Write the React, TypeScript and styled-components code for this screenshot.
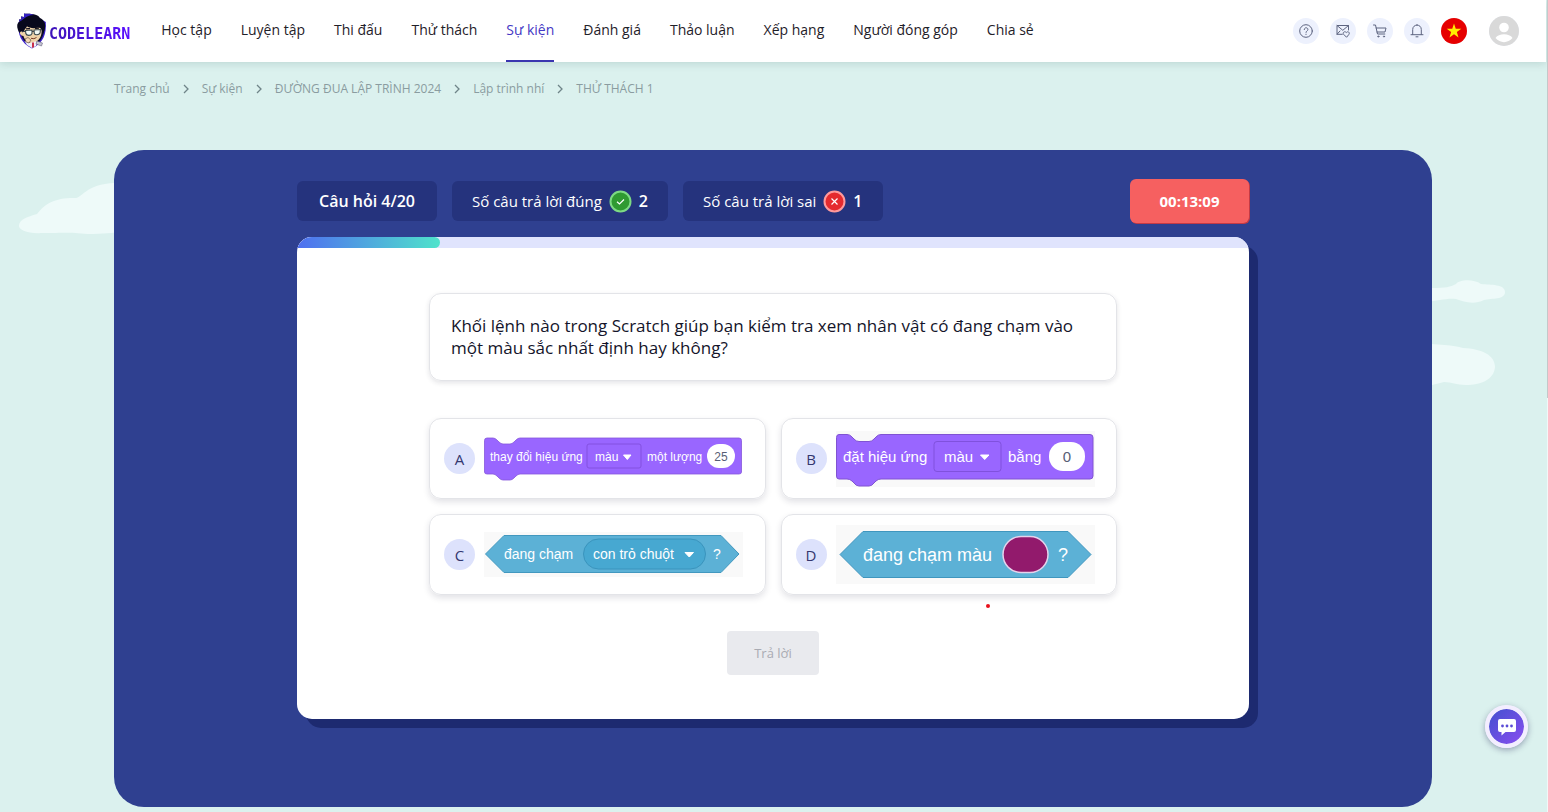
import React from "react";
import styled, { createGlobalStyle } from "styled-components";

const GlobalStyle = createGlobalStyle`
  *, *::before, *::after { box-sizing: border-box; }
  body {
    margin: 0;
    background: #dbf1ee;
    font-family: "Open Sans", "Noto Sans", sans-serif;
    color: #1c1c2b;
  }
  button { font-family: inherit; cursor: pointer; }
`;

const Page = styled.div`
  position: relative;
  min-height: 100vh;
  padding: 0 2px 5px 0;
  overflow: hidden;
`;

const ScrollRail = styled.div`
  position: absolute;
  z-index: 3;
  top: 0;
  right: 0;
  bottom: 0;
  width: 1px;
  background: linear-gradient(#c4c8c9 0 49%, #f2f7f7 49%);
`;

/* ---------- header ---------- */

const Header = styled.header`
  position: relative;
  z-index: 2;
  display: flex;
  align-items: center;
  height: 62px;
  padding: 0 27px 0 16px;
  background: #fff;
  box-shadow: 0 2px 8px rgba(40, 90, 90, 0.16);
`;

const Brand = styled.a`
  display: flex;
  align-items: center;
  gap: 1px;
  margin-right: 31px;
  color: #4a12e0;
  text-decoration: none;
`;

const BrandName = styled.span`
  padding-top: 5px;
  font: 700 15px/20px "DejaVu Sans Mono", monospace;
  background: linear-gradient(90deg, #3d14b8, #5a10ff);
  background-clip: text;
  -webkit-text-fill-color: transparent;
`;

const Nav = styled.nav`
  display: flex;
  gap: 29px;
  height: 100%;
`;

const NavLink = styled.a<{ $active?: boolean }>`
  display: flex;
  align-items: center;
  height: 100%;
  border-bottom: 2px solid ${(p) => (p.$active ? "#3a36b0" : "transparent")};
  color: ${(p) => (p.$active ? "#4338c4" : "#1f2129")};
  font-size: 14px;
  line-height: 20px;
  text-decoration: none;
  white-space: nowrap;
`;

const Tools = styled.div`
  display: flex;
  align-items: center;
  gap: 11px;
  margin-left: auto;
`;

const ToolButton = styled.button`
  display: flex;
  align-items: center;
  justify-content: center;
  width: 26px;
  height: 26px;
  padding: 0;
  border: 0;
  border-radius: 50%;
  background: #edf1fd;
  color: #5d6480;
`;

const AvatarButton = styled(ToolButton)`
  width: 30px;
  height: 30px;
  margin-left: 11px;
`;

/* ---------- page body ---------- */

const Container = styled.main`
  position: relative;
  z-index: 1;
  max-width: 1318px;
  margin: 0 auto;
`;

const Breadcrumbs = styled.nav`
  display: flex;
  align-items: center;
  gap: 12px;
  padding: 18px 0 52px;
  color: #6f8488;
`;

const Crumb = styled.a`
  color: #8a9ca0;
  font-size: 12px;
  line-height: 18px;
  text-decoration: none;
`;

const Cloud = styled.svg<{ $side: "left" | "right"; $top: number }>`
  position: absolute;
  top: ${(p) => p.$top}px;
  ${(p) => p.$side}: 18px;
  fill: #eefaf9;
`;

const Arena = styled.section`
  padding: 29px 16px 88px;
  border-radius: 30px;
  background: #2f4090;
`;

const ArenaInner = styled.div`
  max-width: 952px;
  margin: 0 auto;
`;

const StatusRow = styled.div`
  display: flex;
  align-items: center;
  gap: 15px;
  margin-bottom: 14px;
`;

const Chip = styled.div<{ $strong?: boolean }>`
  display: flex;
  align-items: center;
  gap: 7px;
  height: 40px;
  padding: 0 ${(p) => (p.$strong ? 22 : 20)}px;
  border-radius: 6px;
  background: #25337d;
  color: #fff;
  font-size: ${(p) => (p.$strong ? 16 : 15)}px;
  font-weight: ${(p) => (p.$strong ? 600 : 400)};
  white-space: nowrap;
`;

const Count = styled.span`
  font-size: 16px;
  font-weight: 600;
`;

const Timer = styled.time`
  display: flex;
  align-items: center;
  justify-content: center;
  width: 119px;
  height: 44px;
  margin-left: auto;
  border-radius: 6px;
  background: #f66060;
  box-shadow: 1px 1px 0 #c43a44;
  color: #fff;
  font-size: 15px;
  font-weight: 700;
`;

const Board = styled.div`
  overflow: hidden;
  border-radius: 15px;
  background: #fff;
`;

const BoardShadow = styled.div`
  border-radius: 15px;
  box-shadow: 9px 9px 0 #1d2a70;
`;

const Progress = styled.div`
  height: 11px;
  background: #e0e4fd;
`;

const ProgressFill = styled.div`
  height: 100%;
  border-radius: 0 6px 6px 0;
  background: linear-gradient(90deg, #4f6ff0, #4fe3cb);
`;

const Quiz = styled.form`
  display: flex;
  flex-direction: column;
  align-items: center;
  max-width: 688px;
  margin: 0 auto;
  padding: 45px 0 44px;
`;

const Question = styled.h1`
  width: 100%;
  margin: 0 0 37px;
  padding: 21px;
  border: 1px solid #e3e4e8;
  border-radius: 12px;
  box-shadow: 0 2px 5px rgba(30, 30, 60, 0.12);
  color: #14142a;
  font-size: 17px;
  font-weight: 500;
  line-height: 22px;
`;

const Options = styled.div`
  position: relative;
  display: grid;
  grid-template-columns: 1fr 1fr;
  gap: 15px;
  width: 100%;
`;

const Option = styled.label`
  display: flex;
  align-items: center;
  gap: 9px;
  height: 81px;
  padding: 0 14px;
  border: 1px solid #e3e4e8;
  border-radius: 12px;
  box-shadow: 0 3px 6px rgba(30, 30, 60, 0.13);
  cursor: pointer;
`;

const OptionInput = styled.input`
  position: absolute;
  opacity: 0;
`;

const OptionLetter = styled.span`
  display: flex;
  flex: none;
  align-items: center;
  justify-content: center;
  width: 31px;
  height: 31px;
  border-radius: 50%;
  background: #dde2fc;
  color: #34376f;
  font-size: 15px;
`;

const Block = styled.svg`
  display: block;
  flex: none;
  font-family: "Liberation Sans", Arial, sans-serif;
  fill: #fff;
`;

const LaserDot = styled.i`
  position: absolute;
  bottom: -13px;
  left: 81%;
  width: 4px;
  height: 4px;
  border-radius: 50%;
  background: #e8101c;
`;

const Submit = styled.button`
  width: 92px;
  height: 44px;
  margin-top: 36px;
  border: 0;
  border-radius: 4px;
  background: #e9eaee;
  color: #a9abb3;
  font-size: 13px;
`;

const ChatButton = styled.button`
  position: fixed;
  z-index: 4;
  right: 20px;
  bottom: 64px;
  display: flex;
  align-items: center;
  justify-content: center;
  width: 43px;
  height: 43px;
  padding: 0;
  border: 4px solid #f3edff;
  border-radius: 50%;
  background: linear-gradient(135deg, #4351cf, #8a4df0);
  background-clip: padding-box;
  box-shadow: 0 2px 6px rgba(40, 40, 90, 0.4);
`;

/* ---------- drawings ---------- */

const Mascot = () => (
  <svg width="32" height="38" viewBox="0 0 32 38" aria-hidden="true">
    <path d="M2.500 10 L9 7 L23 6 L29.800 10 C30.500 22 27.500 31 16 36.500 C4.500 31 1.500 22 2.500 10Z" fill="#3a1fc8" />
    <path d="M3.500 11 L10 8 L22 7 L28.800 11 C29 21 26.500 29.500 16 35 C6 29.500 3 21 3.500 11Z" fill="#0e0e2c" />
    <path d="M6.500 15 C9 13 12 15 16 15 C20 16 24 14 25.500 17 C26.500 24 23 29 17 31.500 C12 31 8 27.500 7.500 24 C4.500 24 3 20.500 4.500 19.500 C5.500 19 6.500 20 7 21Z" fill="#efd3aa" />
    <path d="M2 18 C0.500 14 1 11 3.500 9.500 L3 7.500 L5.500 7.500 L5 4.500 L8 5 L8 1.500 C11 2.500 12 1 15 2 C19 2 22 3 24 6 C28 8 30 12 29 16 C28.500 19 27.500 21 26.500 22 C26.500 18 25 15.500 22 15.500 C18 17 13 16 11 14 C10 17 8.500 16.500 8 20 C6 18 4 19 4 21 C3 20.500 2.500 19 2 18Z" fill="#08081c" />
    <path d="M3.500 9.500 L3 7.500 L5.500 7.500 L5 4.500 L8 5 L8 1.500 C11 2.500 12 1 15 2 L18 3 C13 3 10 5 7.500 7 C6 8 5 9 3.500 9.500Z" fill="#3320c0" />
    <path d="M9.500 18.500 L16 18 L16 21.500 C15 24 10.500 24 9.800 21.500Z M18 18 L24.500 17.500 L24 21 C23 23 19 23.500 18.300 21.500Z" fill="#f2faf6" stroke="#39464b" strokeWidth="1.100" />
    <path d="M16 19.500 L18 19.300 M7 19.500 L9.500 19.500" stroke="#35404a" />
    <path d="M10 16.800 L14 16.500 M19 16.500 L23 16" stroke="#1b1520" strokeWidth="1.300" />
    <path d="M15 26.300 Q18 27.500 20.500 25.500" stroke="#7b3f2a" fill="none" />
    <path d="M8.500 29 L14 31 L17 30 L22 29 L20 34 L16 36 L11 33Z" fill="#f1f1f8" />
    <path d="M9 27 L12 25.500 L15 28 L13 31 L10 30Z" fill="#f6d9b4" stroke="#55403c" strokeWidth="0.600" />
    <path d="M16 30.500 L18 30.500 L18 35 L16 36Z" fill="#c8304a" />
    <path d="M21 29 L26.500 31 L25.500 34 L20 32Z" fill="#c4c3d2" stroke="#54506c" strokeWidth="0.500" />
  </svg>
);

const lineIcon = {
  width: 16,
  height: 16,
  viewBox: "0 0 16 16",
  fill: "none",
  stroke: "currentColor",
  strokeWidth: 1,
  strokeLinecap: "round" as const,
  strokeLinejoin: "round" as const,
  "aria-hidden": true,
};

const HelpIcon = () => (
  <svg {...lineIcon}>
    <circle cx="8" cy="8" r="6.300" />
    <path d="M6.200 6.600 C6.200 4 9.900 4.200 9.900 6.500 C9.900 7.900 8 7.900 8 9.400 M8 11.200 V11.500" />
  </svg>
);

const MailHeartIcon = () => (
  <svg {...lineIcon}>
    <path d="M7.300 11.300 H2 V2.500 H13.500 V7 M2 2.500 L7.800 7.300 L13.500 2.500 M2 11.300 L5 8" />
    <path d="M11.300 14 L8.600 11.300 C7.200 9.600 9.800 7.600 11.300 9.600 C12.800 7.600 15.400 9.600 14 11.300Z" />
  </svg>
);

const CartIcon = () => (
  <svg {...lineIcon}>
    <path d="M1.500 2 H3.500 L5.500 11 H12.800 M4.200 5 H14 L13 9 H5" />
    <circle cx="6.300" cy="13.500" r="0.600" />
    <circle cx="12" cy="13.500" r="0.600" />
  </svg>
);

const BellIcon = () => (
  <svg {...lineIcon}>
    <path d="M2 11.700 H14 M3.700 11.500 V6.500 C3.700 0.700 12.300 0.700 12.300 6.500 V11.500 M8 2 V1.500 M7 13.800 H9" />
  </svg>
);

const FlagIcon = () => (
  <svg width="26" height="26" viewBox="0 0 26 26" aria-hidden="true">
    <circle cx="13" cy="13" r="13" fill="#e60000" />
    <path
      d="M13 5.500 L14.750 10.800 L20.300 10.800 L15.850 14.100 L17.500 19.400 L13 16.200 L8.500 19.400 L10.150 14.100 L5.700 10.800 L11.250 10.800Z"
      fill="#ffee00"
    />
  </svg>
);

const AvatarIcon = () => (
  <svg width="30" height="30" viewBox="0 0 30 30" aria-hidden="true">
    <circle cx="15" cy="15" r="15" fill="#d9d9d9" />
    <circle cx="15" cy="11.500" r="4.800" fill="#fff" />
    <path d="M6.500 22 C9.500 17 20.500 17 23.500 22 C19 27.500 11 27.500 6.500 22Z" fill="#fff" />
  </svg>
);

const ChevronIcon = () => (
  <svg width="8" height="10" viewBox="0 0 8 10" fill="none" aria-hidden="true">
    <path d="M2 1 L6 5 L2 9" stroke="currentColor" strokeWidth="1.300" />
  </svg>
);

const ResultIcon = ({ ok }: { ok: boolean }) => (
  <svg width="23" height="23" viewBox="0 0 23 23" fill="none" aria-hidden="true">
    <circle cx="11.500" cy="11.500" r="10" fill={ok ? "#2f9a32" : "#e52a2e"} stroke={ok ? "#7dda84" : "#ff9a9c"} strokeWidth="2" />
    <path d={ok ? "M8 11.700 L10.500 14 L15 9.500" : "M8.500 8.500 L14.500 14.500 M14.500 8.500 L8.500 14.500"} stroke="#fff" strokeWidth="1.200" />
  </svg>
);

const ChatIcon = () => (
  <svg width="20" height="20" viewBox="0 0 20 20" aria-hidden="true">
    <path d="M3 2 H17 Q19 2 19 4 V13 Q19 15 17 15 H8.500 L4.500 18.500 V15 H3 Q1 15 1 13 V4 Q1 2 3 2Z" fill="#fff" />
    <g fill="#5a4bd6">
      <circle cx="5.500" cy="9" r="1.400" />
      <circle cx="10" cy="9" r="1.400" />
      <circle cx="14.500" cy="9" r="1.400" />
    </g>
  </svg>
);

const ChangeEffectBlock = () => (
  <Block width="259" height="50" viewBox="0 0 259 50">
    <path
      d="M3 4 H9 Q11 4 13 6 L15 8 Q17 10 19 10 H26 Q28 10 30 8 L32 6 Q34 4 36 4 H255 Q257.500 4 257.500 6.500 V38 Q257.500 40 255 40 H36 Q34 40 32 42 L30 44 Q28 46 26 46 H19 Q17 46 15 44 L13 42 Q11 40 9 40 H3 Q0.500 40 0.500 38 V6.500 Q0.500 4 3 4Z"
      fill="#9966ff"
      stroke="#8557dc"
      strokeWidth="0.800"
    />
    <text x="6" y="27" fontSize="12">thay đổi hiệu ứng</text>
    <rect x="103" y="10" width="54" height="24" rx="2" fill="none" stroke="#8351e0" />
    <text x="111" y="27" fontSize="12">màu</text>
    <path d="M139.500 21 H147 L143.300 25.500Z" stroke="#fff" strokeLinejoin="round" />
    <text x="163" y="27" fontSize="12">một lượng</text>
    <rect x="223" y="10" width="28" height="24" rx="12" />
    <text x="237" y="27" fontSize="12" textAnchor="middle" fill="#575e75">25</text>
  </Block>
);

const SetEffectBlock = () => (
  <Block width="259" height="56" viewBox="0 0 259 56">
    <rect width="259" height="56" fill="#f9f9f9" />
    <path
      d="M3 3.500 H11 Q14 3.500 16 6 L18 8 Q20 10.500 23 10.500 H33 Q36 10.500 38 8 L40 6 Q42 3.500 45 3.500 H254 Q257 3.500 257 6.500 V45 Q257 48 254 48 H45 Q42 48 40 50 L38 52 Q36 55 33 55 H23 Q20 55 18 52 L16 50 Q14 48 11 48 H3 Q0.500 48 0.500 45 V6.500 Q0.500 3.500 3 3.500Z"
      fill="#9966ff"
      stroke="#8053d2"
    />
    <text x="7" y="31" fontSize="15">đặt hiệu ứng</text>
    <rect x="98" y="10.500" width="67" height="30" rx="3" fill="none" stroke="#8051dd" />
    <text x="108" y="31" fontSize="15">màu</text>
    <path d="M144.500 24 H153 L148.700 28.500Z" stroke="#fff" strokeLinejoin="round" />
    <text x="172" y="31" fontSize="15">bằng</text>
    <rect x="213" y="11" width="36" height="29" rx="14" />
    <text x="231" y="31" fontSize="15" textAnchor="middle" fill="#575e75">0</text>
  </Block>
);

const TouchingPointerBlock = () => (
  <Block width="259" height="45" viewBox="0 0 259 45">
    <rect width="259" height="45" fill="#f9f9f9" />
    <path d="M1.500 22 L20 3.500 H237 L255 22 L237 40.500 H20Z" fill="#5cb1d6" stroke="#4298bf" />
    <text x="20" y="27" fontSize="14">đang chạm</text>
    <rect x="99.500" y="7" width="122" height="30" rx="15" fill="#47a8d1" stroke="#3a94bd" />
    <text x="109" y="27" fontSize="14">con trỏ chuột</text>
    <path d="M201 20.500 H209.500 L205.300 25Z" stroke="#fff" strokeLinejoin="round" />
    <text x="229" y="27" fontSize="14">?</text>
  </Block>
);

const TouchingColorBlock = () => (
  <Block width="259" height="59" viewBox="0 0 259 59">
    <rect width="259" height="59" fill="#f9f9f9" />
    <path d="M4 29.500 L27 6.500 H232 L255 29.500 L232 52.500 H27Z" fill="#5cb1d6" stroke="#3f96be" />
    <text x="27" y="36" fontSize="18">đang chạm màu</text>
    <rect x="167" y="11.500" width="45" height="36" rx="18" fill="#921a6c" stroke="#e6d3ec" strokeWidth="1.500" />
    <text x="222" y="36" fontSize="18">?</text>
  </Block>
);

/* ---------- data ---------- */

const navItems = [
  "Học tập",
  "Luyện tập",
  "Thi đấu",
  "Thử thách",
  "Sự kiện",
  "Đánh giá",
  "Thảo luận",
  "Xếp hạng",
  "Người đóng góp",
  "Chia sẻ",
];

const crumbs = ["Trang chủ", "Sự kiện", "ĐƯỜNG ĐUA LẬP TRÌNH 2024", "Lập trình nhí", "THỬ THÁCH 1"];

const tools = [
  { label: "Trợ giúp", Icon: HelpIcon },
  { label: "Lời mời", Icon: MailHeartIcon },
  { label: "Giỏ hàng", Icon: CartIcon },
  { label: "Thông báo", Icon: BellIcon },
  { label: "Tiếng Việt", Icon: FlagIcon },
];

const options = [
  { letter: "A", Picture: ChangeEffectBlock },
  { letter: "B", Picture: SetEffectBlock },
  { letter: "C", Picture: TouchingPointerBlock },
  { letter: "D", Picture: TouchingColorBlock },
];

export default function App() {
  return (
    <>
      <GlobalStyle />
      <Page>
        <Header>
          <Brand href="#">
            <Mascot />
            <BrandName>CODELEARN</BrandName>
          </Brand>
          <Nav>
            {navItems.map((item) => (
              <NavLink key={item} href="#" $active={item === "Sự kiện"}>
                {item}
              </NavLink>
            ))}
          </Nav>
          <Tools>
            {tools.map(({ label, Icon }) => (
              <ToolButton key={label} type="button" aria-label={label}>
                <Icon />
              </ToolButton>
            ))}
            <AvatarButton type="button" aria-label="Tài khoản">
              <AvatarIcon />
            </AvatarButton>
          </Tools>
        </Header>

        <Cloud $side="left" $top={180} width="140" height="56" viewBox="0 0 140 56" aria-hidden="true">
          <path d="M1 45 C2 39 9 37 19 34 C27 24 36 18 56 18 C65 19 66 4 97 3 L140 0 V46 C110 50 100 54 70 54 C50 52 45 53 25 53 C10 54 0 50 1 45Z" />
        </Cloud>
        <Cloud $side="right" $top={278} width="134" height="110" viewBox="0 0 134 110" aria-hidden="true">
          <path d="M0 10 H36 C50 10 54 9 60 6 C64 1 78 1 85 6 C95 7 109 6 109 14 C109 22 96 20 88 22 C78 27 68 24 60 21 C50 20 42 23 30 24 H0Z" />
          <path d="M0 66 C36 65 56 67 67 70 C86 71 99 77 99 89 C98 102 84 107 70 107 C60 107 56 104 48 104 L36 107 H0Z" />
        </Cloud>

        <Container>
          <Breadcrumbs aria-label="Breadcrumb">
            {crumbs.map((crumb, i) => (
              <React.Fragment key={crumb}>
                {i > 0 && <ChevronIcon />}
                <Crumb href="#">{crumb}</Crumb>
              </React.Fragment>
            ))}
          </Breadcrumbs>

          <Arena>
            <ArenaInner>
              <StatusRow>
                <Chip $strong>Câu hỏi 4/20</Chip>
                <Chip>
                  Số câu trả lời đúng
                  <ResultIcon ok />
                  <Count>2</Count>
                </Chip>
                <Chip>
                  Số câu trả lời sai
                  <ResultIcon ok={false} />
                  <Count>1</Count>
                </Chip>
                <Timer>00:13:09</Timer>
              </StatusRow>

              <BoardShadow>
                <Board>
                  <Progress role="progressbar" aria-label="Tiến độ" aria-valuenow={15} aria-valuemin={0} aria-valuemax={100}>
                    <ProgressFill style={{ width: "15%" }} />
                  </Progress>
                  <Quiz onSubmit={(e) => e.preventDefault()}>
                    <Question>
                      Khối lệnh nào trong Scratch giúp bạn kiểm tra xem nhân vật có đang chạm vào một màu sắc nhất định hay không?
                    </Question>
                    <Options>
                      {options.map(({ letter, Picture }) => (
                        <Option key={letter}>
                          <OptionInput type="radio" name="answer" value={letter} />
                          <OptionLetter>{letter}</OptionLetter>
                          <Picture />
                        </Option>
                      ))}
                      <LaserDot />
                    </Options>
                    <Submit type="submit" disabled>
                      Trả lời
                    </Submit>
                  </Quiz>
                </Board>
              </BoardShadow>
            </ArenaInner>
          </Arena>
        </Container>

        <ChatButton type="button" aria-label="Chat">
          <ChatIcon />
        </ChatButton>
        <ScrollRail />
      </Page>
    </>
  );
}
